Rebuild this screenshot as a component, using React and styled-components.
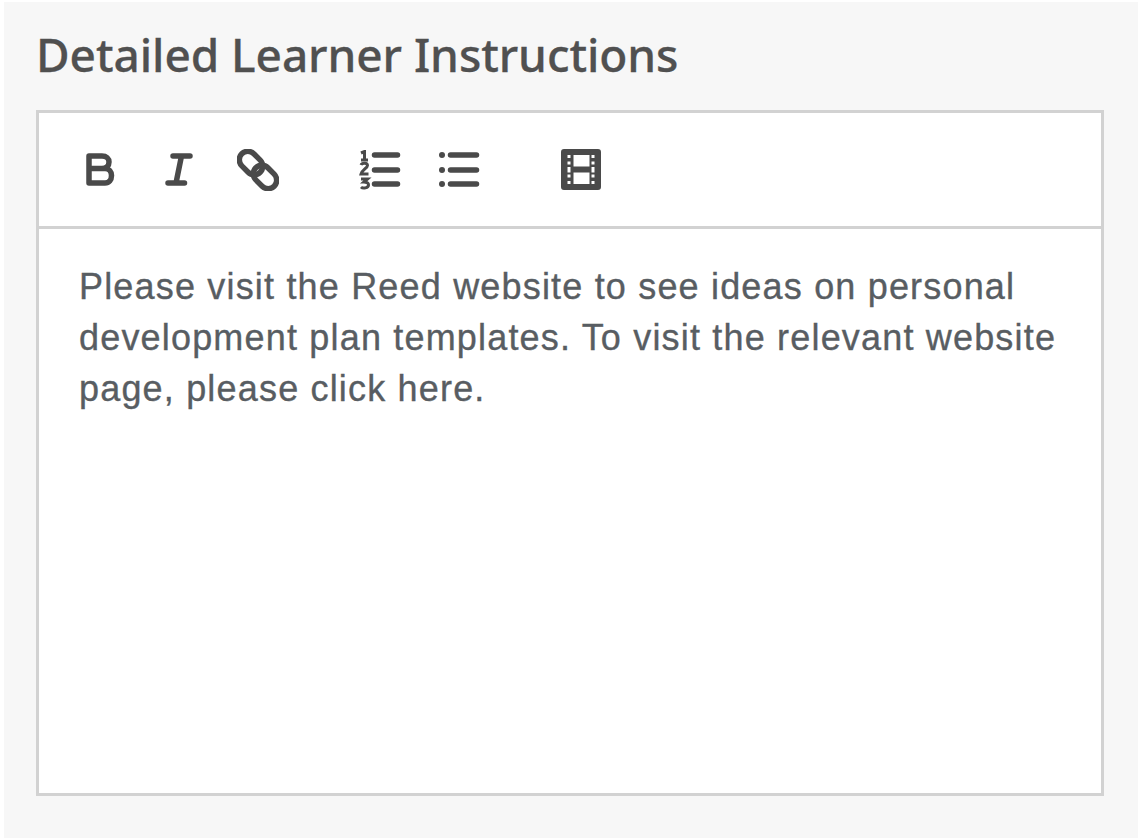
import React from "react";
import styled, { createGlobalStyle } from "styled-components";

const Global = createGlobalStyle`
  html, body { margin: 0; padding: 0; background: #fff; }
  body { width: 1142px; height: 838px; overflow: hidden; }
`;

const Panel = styled.main`
  box-sizing: border-box;
  margin: 2px 4px 0;
  height: 836px;
  padding: 24px 34px 0 32px;
  background: #f7f7f7;
`;

const Title = styled.h1`
  margin: 0 0 28px;
  height: 56px;
  font: 500 46px/56px "Noto Sans", sans-serif;
  color: #505050;
  letter-spacing: -0.07px;
  -webkit-text-stroke: 0.3px #505050;
`;

const Editor = styled.section`
  box-sizing: border-box;
  height: 686px;
  border: 3px solid #d2d2d2;
  background: #fff;
  display: flex;
  flex-direction: column;
`;

const Toolbar = styled.div`
  box-sizing: border-box;
  height: 116px;
  flex: none;
  border-bottom: 3px solid #d2d2d2;
  display: flex;
  align-items: center;
  padding: 0 0 0 46px;
`;

const ToolButton = styled.button`
  border: 0;
  padding: 0;
  background: none;
  display: flex;
  width: ${(p) => p.$w}px;
  margin-right: ${(p) => p.$gap}px;
  color: #4a4a4a;
  svg { display: block; }
`;

const Body = styled.div`
  padding: 32px 40px;
  font: 400 36px/51px "Liberation Sans", Arial, sans-serif;
  letter-spacing: 1.18px;
  -webkit-text-stroke: 0.35px #585d62;
  color: #585d62;
`;

const BoldIcon = () => (
  <svg width="30" height="36" viewBox="0 0 30 36" fill="none" stroke="currentColor" strokeWidth="5.500" strokeLinejoin="round">
    <path d="M4 4H17C21.500 4 24 6.500 24 10C24 14 21.500 16.500 17 16.500H4ZM4 16.500H20C24 16.500 26.500 19.500 26.500 23.500C26.500 28 24 31 20 31H4Z" />
  </svg>
);

const ItalicIcon = () => (
  <svg width="30" height="36" viewBox="0 0 30 36" fill="none" stroke="currentColor" strokeWidth="5.500" strokeLinecap="round">
    <path d="M9 4H26M4 31H20.500M17.500 4L12 31" />
  </svg>
);

const LinkIcon = () => (
  <svg width="42" height="42" viewBox="0 0 42 42" fill="none" stroke="currentColor" strokeWidth="5.500">
    <rect x="1" y="5.500" width="26" height="17" rx="8.500" transform="rotate(45 14 14)" />
    <rect x="15" y="19.500" width="26" height="17" rx="8.500" transform="rotate(45 28 28)" />
  </svg>
);

const OrderedIcon = () => (
  <svg width="42" height="40" viewBox="0 0 42 40">
    <g fill="none" stroke="currentColor" strokeWidth="5.500" strokeLinecap="round">
      <path d="M15.500 5H38.500M15.500 20H38.500M15.500 34H38.500" />
    </g>
    <g fill="none" stroke="currentColor" strokeWidth="3">
      <path d="M2 3L5.500 1.500V10M2 10H9" />
      <path d="M2 15C3 12.500 8.500 12.500 8.500 15.500C8.500 18 3 20 2 24H9.500" />
      <path d="M2 29H8.500L5 32C8 32 9.500 33.500 9.500 35C9.500 38 4 39 2 37" />
    </g>
  </svg>
);

const BulletIcon = () => (
  <svg width="42" height="40" viewBox="0 0 42 40">
    <g fill="currentColor">
      <circle cx="4" cy="5" r="3" />
      <circle cx="4" cy="20" r="3" />
      <circle cx="4" cy="34" r="3" />
    </g>
    <path d="M12.500 5H38.500M12.500 20H38.500M12.500 34H38.500" fill="none" stroke="currentColor" strokeWidth="5.500" strokeLinecap="round" />
  </svg>
);

const FilmIcon = () => (
  <svg width="40" height="41" viewBox="0 0 40 41">
    <path
      fillRule="evenodd"
      fill="currentColor"
      d="M3 0H37A3 3 0 0 1 40 3V38A3 3 0 0 1 37 41H3A3 3 0 0 1 0 38V3A3 3 0 0 1 3 0ZM12.500 6V17.500H28.500V6ZM12.500 23.500V35H28.500V23.500ZM6.500 6V9H9.500V6ZM30.500 6V9H33.500V6ZM6.500 12.500V15.500H9.500V12.500ZM30.500 12.500V15.500H33.500V12.500ZM6.500 18V23.500H9.500V18ZM30.500 18V23.500H33.500V18ZM6.500 25.500V28.500H9.500V25.500ZM30.500 25.500V28.500H33.500V25.500ZM6.500 32V35H9.500V32ZM30.500 32V35H33.500V32Z"
    />
  </svg>
);

export default function App() {
  return (
    <>
      <Global />
      <Panel>
        <Title>Detailed Learner Instructions</Title>
        <Editor>
          <Toolbar>
            <ToolButton $w={30} $gap={49}><BoldIcon /></ToolButton>
            <ToolButton $w={30} $gap={43}><ItalicIcon /></ToolButton>
            <ToolButton $w={42} $gap={80}><LinkIcon /></ToolButton>
            <ToolButton $w={42} $gap={37}><OrderedIcon /></ToolButton>
            <ToolButton $w={42} $gap={81}><BulletIcon /></ToolButton>
            <ToolButton $w={40} $gap={0}><FilmIcon /></ToolButton>
          </Toolbar>
          <Body>
            Please visit the Reed website to see ideas on personal development plan templates. To visit the relevant website page, please click here.
          </Body>
        </Editor>
      </Panel>
    </>
  );
}
